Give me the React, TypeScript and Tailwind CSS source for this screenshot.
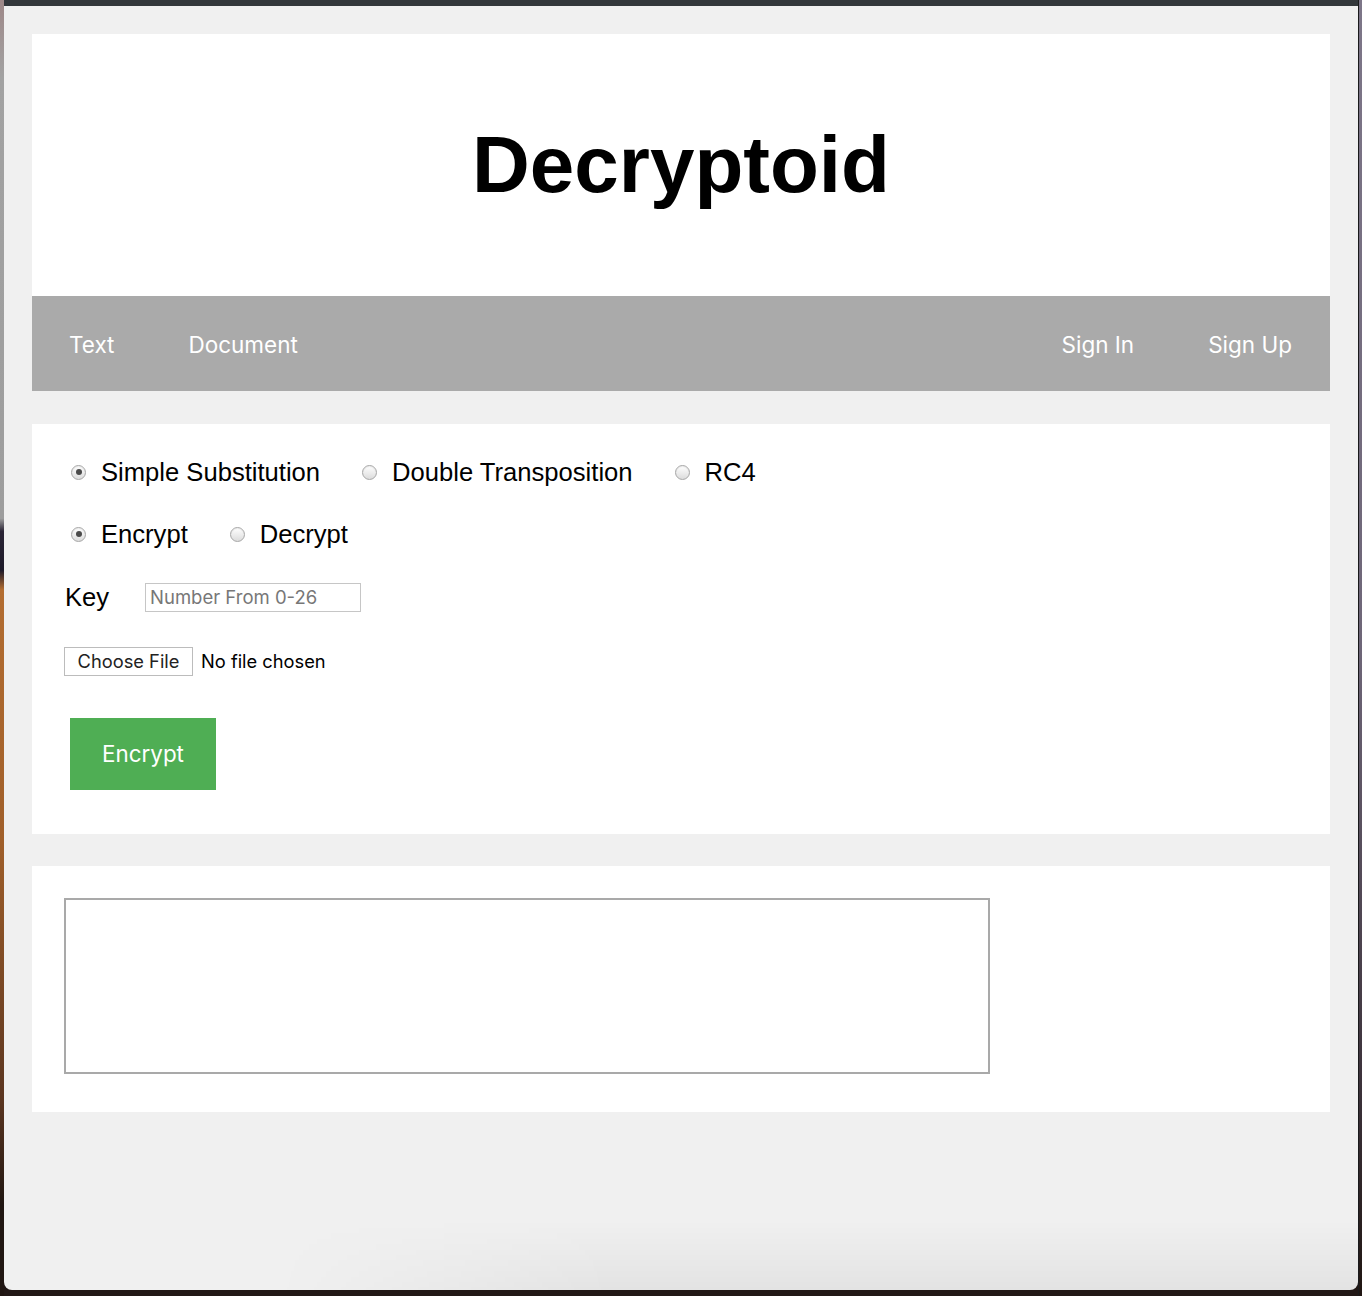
import React, { useState } from 'react';

const Radio = ({ checked, onClick }: { checked: boolean; onClick: () => void }) => (
  <span
    onClick={onClick}
    className="flex h-[15px] w-[15px] shrink-0 cursor-pointer items-center justify-center rounded-full border border-[#a6a6a6] bg-[linear-gradient(to_bottom,#ffffff,#dcdcdc)] shadow-[inset_0_1px_1px_rgba(0,0,0,0.08)]"
  >
    {checked && <span className="h-[6px] w-[6px] rounded-full bg-[#4a4a4a]" />}
  </span>
);

const Option = ({ label, checked, onClick, first }: { label: string; checked: boolean; onClick: () => void; first?: boolean }) => (
  <label className={`flex items-center gap-[15px] ${first ? 'ml-[7px]' : 'ml-[42px]'}`}>
    <Radio checked={checked} onClick={onClick} />
    <span onClick={onClick} className="cursor-pointer">{label}</span>
  </label>
);

const App = () => {
  const [cipher, setCipher] = useState('simple');
  const [mode, setMode] = useState('encrypt');

  const ciphers = [
    { id: 'simple', label: 'Simple Substitution' },
    { id: 'double', label: 'Double Transposition' },
    { id: 'rc4', label: 'RC4' },
  ];

  return (
    <div className="flex h-[1296px] w-[1362px] overflow-hidden bg-[#201614]">
      {/* desktop peeking at the left */}
      <div className="w-[4px] shrink-0 bg-[linear-gradient(to_bottom,#9e8888_0%,#a2a2a2_6%,#9d9d9d_40%,#2b2536_41%,#1d1a29_44%,#b36d31_45.5%,#a05f2a_65%,#5a3520_85%,#201612_93%)]" />

      <div className="flex flex-1 flex-col">
        <div className="h-[6px] shrink-0 bg-[#33373b]" />

        {/* browser window */}
        <div className="flex h-[1284px] flex-col overflow-hidden rounded-b-[8px] bg-[#f0f0f0] px-[28px] pt-[28px] font-['Liberation_Sans',Arial,sans-serif] text-black">
          {/* Header */}
          <div className="flex h-[262px] items-center justify-center bg-white">
            <h1 className="text-[80px] font-bold leading-none">Decryptoid</h1>
          </div>

          {/* Nav */}
          <div className="flex h-[95px] items-center bg-[#aaaaaa] pt-[3px] font-['Inter',sans-serif] text-[22.5px] text-white">
            <a className="px-[37px]">Text</a>
            <a className="px-[37px]">Document</a>
            <div className="flex-1" />
            <a className="px-[37px]">Sign In</a>
            <a className="pl-[37px] pr-[38px]">Sign Up</a>
          </div>

          {/* Form */}
          <div className="mt-[33px] bg-white px-[32px] pb-[44px] pt-[33px] text-[25.6px]">
            <div className="flex h-[30px] items-center">
              {ciphers.map((c, i) => (
                <Option key={c.id} label={c.label} first={i === 0} checked={cipher === c.id} onClick={() => setCipher(c.id)} />
              ))}
            </div>

            <div className="mt-[32px] flex h-[30px] items-center">
              <Option label="Encrypt" first checked={mode === 'encrypt'} onClick={() => setMode('encrypt')} />
              <Option label="Decrypt" checked={mode === 'decrypt'} onClick={() => setMode('decrypt')} />
            </div>

            <div className="mt-[32px] flex h-[32px] items-center">
              <span className="w-[81px] pl-[1px]">Key</span>
              <input
                placeholder="Number From 0-26"
                className="h-[29px] w-[216px] border border-[#c6c6c6] px-[4px] font-['Inter',sans-serif] text-[18.5px] text-black outline-none placeholder:text-[#777777]"
              />
            </div>

            <div className="mt-[34px] flex h-[29px] items-center font-['Inter',sans-serif] text-[18.3px]">
              <span className="flex h-[29px] w-[129px] items-center justify-center border border-[#bcbcbc] bg-white text-[#222222]">
                Choose File
              </span>
              <span className="ml-[8px]">No file chosen</span>
            </div>

            <button className="ml-[6px] mt-[42px] flex h-[72px] w-[146px] items-center justify-center bg-[#4fae54] font-['Inter',sans-serif] text-[22.4px] text-white">
              Encrypt
            </button>
          </div>

          {/* Output */}
          <div className="mt-[32px] bg-white px-[32px] pb-[38px] pt-[32px]">
            <textarea className="block h-[176px] w-[926px] resize-none border-2 border-[#a9a9a9] outline-none" />
          </div>

          <div className="-mx-[28px] mt-auto h-[70px] bg-[linear-gradient(to_bottom,rgba(0,0,0,0)_0%,rgba(0,0,0,0.05)_100%)] [mask-image:linear-gradient(to_right,transparent_20%,black_45%)]" />
        </div>

        <div className="flex-1 bg-[#221816]" />
      </div>

      {/* desktop peeking at the right */}
      <div className="w-[4px] shrink-0 border-l border-[#1a1a1c] bg-[linear-gradient(to_bottom,#7d7688_0%,#6e6678_50%,#3a3038_85%,#201612_100%)]" />
    </div>
  );
};

export default App;
